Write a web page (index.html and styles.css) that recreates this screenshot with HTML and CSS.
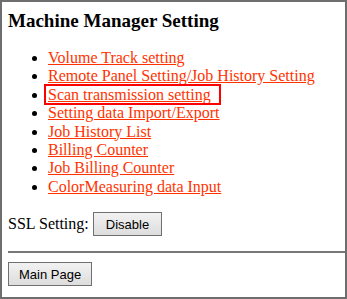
FILE: index.html
```html
<!DOCTYPE html>
<html lang="en">
<head>
  <meta charset="UTF-8">
  <title>Machine Manager Setting</title>
  <link rel="stylesheet" href="styles.css">
</head>
<body>
  <div class="frame">
    <h1 class="title">Machine Manager Setting</h1>

    <ul class="menu">
      <li><a href="#">Volume Track setting</a></li>
      <li><a href="#">Remote Panel Setting/Job History Setting</a></li>
      <li><a href="#" class="current">Scan transmission setting</a></li>
      <li><a href="#">Setting data Import/Export</a></li>
      <li><a href="#">Job History List</a></li>
      <li><a href="#">Billing Counter</a></li>
      <li><a href="#">Job Billing Counter</a></li>
      <li><a href="#">ColorMeasuring data Input</a></li>
    </ul>

    <div class="ssl-row">
      <span>SSL Setting:</span>
      <button class="btn">Disable</button>
    </div>

    <hr class="divider">

    <button class="btn main-btn">Main Page</button>
  </div>
</body>
</html>
```

FILE: styles.css
```css
/* Base */
html, body {
  margin: 0;
  padding: 0;
}

body {
  font-family: "Liberation Serif", "Times New Roman", serif;
  font-size: 16px;
  color: #000;
  background: #fff;
}

.frame {
  box-sizing: border-box;
  width: 347px;
  height: 299px;
  border: 2px solid #6e6e6e;
  padding: 0 0 0 6px;
  overflow: hidden;
}

.title {
  font-size: 19px;
  font-weight: bold;
  margin: 8px 0 0;
  line-height: 22px;
}

/* Menu */
.menu {
  margin: 17px 0 0;
  padding-left: 40px;
  line-height: 18.4px;
}

.menu a {
  color: #ff3300;
  text-decoration: underline;
}

.menu a.current {
  outline: 2px solid #ff0000;
  outline-offset: 0;
  margin-left: -2px;
  padding: 0 8px 0 2px;
}

/* SSL row */
.ssl-row {
  margin-top: 16px;
  display: flex;
  align-items: center;
  gap: 4px;
}

.btn {
  font-family: "Liberation Sans", Arial, sans-serif;
  font-size: 13px;
  color: #000;
  height: 24px;
  padding: 0 12px;
  border: 1px solid #707070;
  border-radius: 0;
  background: linear-gradient(#f2f2f2, #dddddd);
}

.divider {
  margin: 15px 0 9px;
  border: none;
  border-top: 2px solid #777;
  height: 0;
}

.main-btn {
  height: 24px;
  padding: 0 10px;
}
```
